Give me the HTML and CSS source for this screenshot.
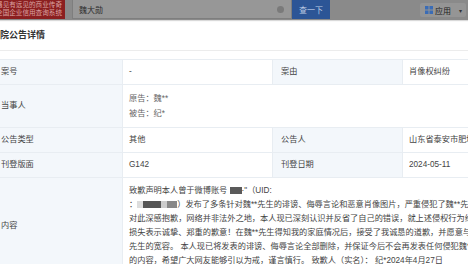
FILE: index.html
```html
<!DOCTYPE html>
<html lang="zh-CN">
<head>
    <meta charset="UTF-8">
    <meta name="viewport" content="width=device-width, initial-scale=1.0">
    <title>法院公告详情</title>
    <link rel="stylesheet" href="styles.css">
</head>
<body>
    <div class="topbar">
        <div class="logo">
            <span>遇见有远见的商业传奇</span>
            <span>全国企业信用查询系统</span>
        </div>
        <div class="search">
            <div class="search-input">
                <span>魏大勋</span>
                <i class="clear"></i>
            </div>
            <div class="search-btn">查一下</div>
        </div>
        <div class="apps">
            <svg width="8" height="8" viewBox="0 0 8 8">
                <rect x="0" y="0" width="3.5" height="3.5" fill="#3a6cb6"/>
                <rect x="4.5" y="0" width="3.5" height="3.5" fill="#3a6cb6"/>
                <rect x="0" y="4.5" width="3.5" height="3.5" fill="#3a6cb6"/>
                <rect x="4.5" y="4.5" width="3.5" height="3.5" fill="#3a6cb6"/>
            </svg>
            <span>应用</span>
            <span class="caret">▾</span>
        </div>
    </div>

    <div class="modal">
        <div class="modal-head">法院公告详情</div>
        <table class="detail">
            <colgroup>
                <col class="c-label">
                <col class="c-value">
                <col class="c-label">
                <col class="c-value">
            </colgroup>
            <tr>
                <td class="label">案号</td>
                <td>-</td>
                <td class="label">案由</td>
                <td>肖像权纠纷</td>
            </tr>
            <tr>
                <td class="label">当事人</td>
                <td colspan="3" class="parties">
                    <div>原告：魏**</div>
                    <div>被告：纪*</div>
                </td>
            </tr>
            <tr>
                <td class="label">公告类型</td>
                <td>其他</td>
                <td class="label">公告人</td>
                <td>山东省泰安市肥城市人民法院</td>
            </tr>
            <tr>
                <td class="label">刊登版面</td>
                <td>G142</td>
                <td class="label">刊登日期</td>
                <td>2024-05-11</td>
            </tr>
            <tr>
                <td class="label">内容</td>
                <td colspan="3" class="content">
                    致歉声明本人曾于微博账号 <span class="mask m1"></span>·"（UID:<br>
                    ：<span class="mask m2"></span>）发布了多条针对魏**先生的诽谤、侮辱言论和恶意肖像图片，严重侵犯了魏**先生的名誉权和肖像权，本人<br>
                    对此深感抱歉，网络并非法外之地，本人现已深刻认识并反省了自己的错误，就上述侵权行为给魏**先生造成的<br>
                    损失表示诚挚、郑重的歉意！在魏**先生得知我的家庭情况后，接受了我诚恳的道歉，并愿意与我和解，感谢魏**<br>
                    先生的宽容。 本人现已将发表的诽谤、侮辱言论全部删除，并保证今后不会再发表任何侵犯魏**先生权益<br>
                    的内容，希望广大网友能够引以为戒，谨言慎行。 致歉人（实名）： 纪*2024年4月27日
                </td>
            </tr>
        </table>
    </div>
</body>
</html>
```

FILE: styles.css
```css
body {
    margin: 0;
    width: 468px;
    height: 264px;
    overflow: hidden;
    background: #fff;
    font-family: "Liberation Sans", "Noto Sans CJK SC", sans-serif;
    color: #333;
}

/* top bar, dimmed by the overlay */
.topbar {
    display: flex;
    align-items: center;
    height: 20px;
    background: #8a8a8a;
    box-shadow: 0 1px 1px rgba(0, 0, 0, 0.15);
}
.logo {
    width: 65px;
    height: 19px;
    align-self: flex-start;
    background: #8b1f20;
    color: #dca3a3;
    font-size: 6.6px;
    line-height: 8px;
    padding: 1px 3px 0 0;
    box-sizing: border-box;
    display: flex;
    flex-direction: column;
    align-items: flex-end;
    overflow: hidden;
    white-space: nowrap;
}
.search {
    display: flex;
    margin-left: 7px;
    height: 19px;
    align-self: flex-start;
}
.search-input {
    width: 220px;
    display: flex;
    align-items: center;
    justify-content: space-between;
    padding: 0 6px;
    box-sizing: border-box;
    background: #979797;
    border: 1px solid #7e7e7e;
    border-top: none;
    font-size: 8px;
    color: #2e2e2e;
}
.clear {
    width: 7px;
    height: 7px;
    border-radius: 50%;
    background: #7a7a7a;
    margin-right: 1px;
}
.search-btn {
    width: 38px;
    display: flex;
    align-items: center;
    justify-content: center;
    background: #2c5596;
    color: #bccbe3;
    font-size: 8px;
}
.apps {
    display: flex;
    align-items: center;
    gap: 2px;
    margin-left: auto;
    margin-right: 2px;
    padding: 0 4px 0 5px;
    height: 14px;
    background: #959595;
    border-radius: 2px;
    font-size: 8px;
    color: #222;
}
.apps .caret {
    margin-left: 6px;
    font-size: 6px;
    color: #333;
}

/* modal */
.modal {
    margin-left: -9px;
    width: 600px;
}
.modal-head {
    height: 30px;
    line-height: 30px;
    border-bottom: 1px solid #ececec;
    font-size: 9px;
    font-weight: bold;
    color: #333;
}
.detail {
    margin: 8px 0 0 1px;
    width: 560px;
    table-layout: fixed;
    border-collapse: collapse;
    font-size: 8.2px;
    line-height: 12px;
}
.c-label {
    width: 130px;
}
.c-value {
    width: 150px;
}
.detail td {
    border: 1px solid #e8edf2;
    padding: 6px 7px 6px 6px;
    color: #444;
    white-space: nowrap;
    overflow: hidden;
    vertical-align: middle;
}
.detail td.label {
    background: #f3f7fb;
    color: #444;
    padding-left: 8px;
}
.parties {
    line-height: 15px;
    color: #666;
}
.parties div {
    color: #666;
}
.content {
    line-height: 14px;
}
.mask {
    display: inline-block;
    height: 7px;
    background: #5a5a5a;
    filter: blur(0.6px);
    vertical-align: -1px;
}
.m1 {
    width: 12px;
}
.m2 {
    width: 40px;
    background: linear-gradient(90deg, #ddd 0 6px, #555 6px 24px, #ccc 24px 30px, #888 30px);
}
```
